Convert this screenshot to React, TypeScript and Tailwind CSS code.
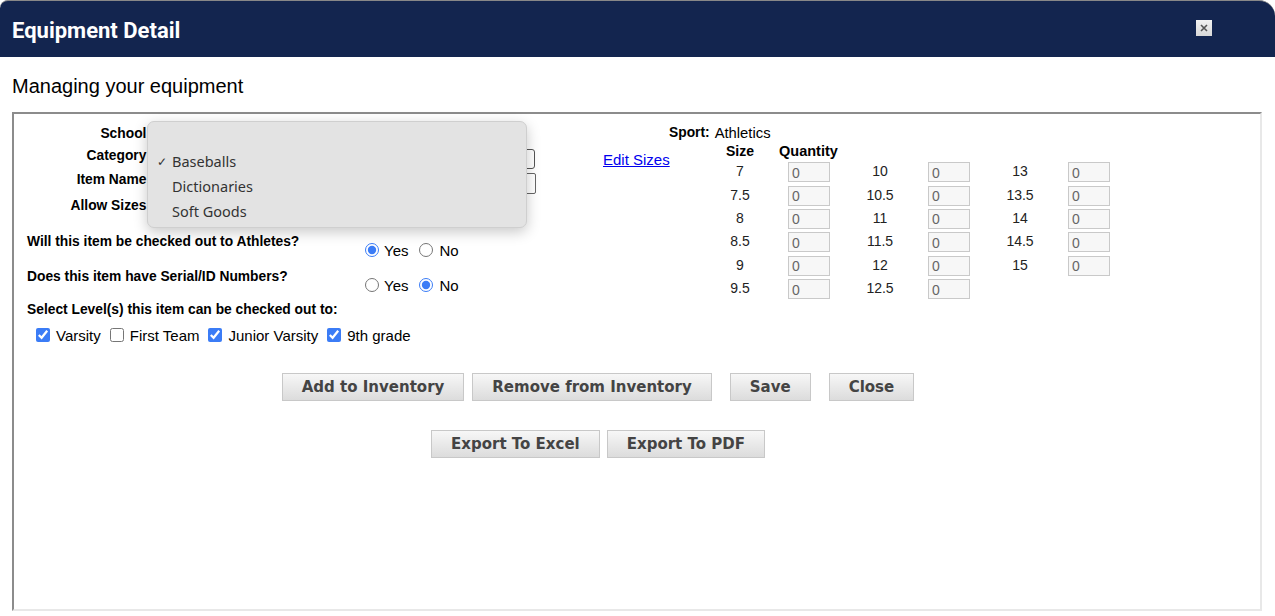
import React from "react";

const sizeCols = [
  ["7", "7.5", "8", "8.5", "9", "9.5"],
  ["10", "10.5", "11", "11.5", "12", "12.5"],
  ["13", "13.5", "14", "14.5", "15"],
];

const categoryOptions = ["Baseballs", "Dictionaries", "Soft Goods"];

const levels = [
  { name: "Varsity", checked: true },
  { name: "First Team", checked: false },
  { name: "Junior Varsity", checked: true },
  { name: "9th grade", checked: true },
];

const Btn = ({ label }: { label: string }) => (
  <button className="h-[28px] px-[19px] border border-[#c8c8c8] bg-gradient-to-b from-[#f7f7f7] to-[#dcdcdc] text-[#444] font-bold text-[15px] [font-family:'DejaVu_Sans',sans-serif]">
    {label}
  </button>
);

const QtyBox = () => (
  <input
    readOnly
    value="0"
    className="w-[42px] h-[20px] border border-[#c9c9c9] bg-[#f7f7f7] text-[#666] text-[14px] pl-[3px] pt-[2px] outline-none"
  />
);

const SizeCol = ({ sizes }: { sizes: string[] }) => (
  <div className="flex flex-col">
    {sizes.map((s) => (
      <div key={s} className="h-[23.4px] flex items-center">
        <span className="w-[40px] text-center text-[14px] text-[#222] -mt-[2px]">{s}</span>
        <span className="ml-[28px]">
          <QtyBox />
        </span>
      </div>
    ))}
  </div>
);

const YesNo = ({ name, yes }: { name: string; yes: boolean }) => (
  <div className="h-[18px] mt-[8px] flex items-center text-[15px]">
    <input type="radio" name={name} defaultChecked={yes} className="w-[14px] h-[14px] m-0 accent-[#3b7cf6]" />
    <span className="ml-[5px] mt-[2px]">Yes</span>
    <input type="radio" name={name} defaultChecked={!yes} className="w-[14px] h-[14px] m-0 ml-[11px] accent-[#3b7cf6]" />
    <span className="ml-[6px] mt-[2px]">No</span>
  </div>
);

export default function App() {
  return (
    <div className="w-[1275px] h-[616px] bg-white [font-family:'Liberation_Sans',Arial,sans-serif] text-black overflow-hidden">
      <div className="h-[57px] bg-[#13254f] rounded-tl-[8px] rounded-tr-[16px] border-t border-[#888] flex items-center justify-between pl-[12px] pr-[63px]">
        <h1 className="text-white text-[22px] font-bold [font-family:Roboto,sans-serif] mt-[3px]">
          Equipment Detail
        </h1>
        <button className="w-[16px] h-[16px] bg-gradient-to-b from-[#f2f2f2] to-[#d8d8d8] flex items-center justify-center mt-[-2px]">
          <svg width="8" height="8" viewBox="0 0 8 8">
            <path d="M1 1L7 7M7 1L1 7" stroke="#555" strokeWidth="1.6" />
          </svg>
        </button>
      </div>

      <div className="pl-[12px] pt-[14px] text-[20px] h-[55px]">Managing your equipment</div>

      <div className="relative ml-[12px] w-[1250px] h-[499px] border-2 border-t-[#8c8c8c] border-l-[#8c8c8c] border-r-[#e8e8e8] border-b-[#e8e8e8]">
        <div className="flex">
          {/* left form */}
          <div className="w-[586px] pt-[10px]">
            <div className="flex flex-col text-[13.8px]">
              <div className="h-[21px] flex items-center">
                <span className="w-[137px] text-right font-bold">School:</span>
              </div>
              <div className="h-[23px] flex items-center">
                <span className="w-[137px] text-right font-bold">Category:</span>
                <div className="-ml-[2px] w-[386px] h-[20px] border border-[#555] rounded-[3px] mt-[4px]" />
              </div>
              <div className="h-[25px] flex items-center">
                <span className="w-[137px] text-right font-bold">Item Name:</span>
                <div className="-ml-[2px] w-[387px] h-[21px] border border-[#666] rounded-[2px] mt-[6px]" />
              </div>
              <div className="h-[26px] flex items-center">
                <span className="w-[137px] text-right font-bold">Allow Sizes:</span>
              </div>
            </div>

            <div className="flex items-start h-[35px] mt-[14px] pl-[13px] text-[13.8px]">
              <span className="w-[338px] h-[18px] flex items-center font-bold">Will this item be checked out to Athletes?</span>
              <YesNo name="ath" yes={true} />
            </div>
            <div className="flex items-start h-[33px] pl-[13px] text-[13.8px]">
              <span className="w-[338px] h-[18px] flex items-center font-bold">Does this item have Serial/ID Numbers?</span>
              <YesNo name="ser" yes={false} />
            </div>
            <div className="pl-[13px] h-[18px] flex items-center text-[13.8px] font-bold">
              Select Level(s) this item can be checked out to:
            </div>
            <div className="flex items-center h-[18px] pl-[22px] mt-[7px] text-[15px]">
              {levels.map((l) => (
                <label key={l.name} className="flex items-center mr-[9px]">
                  <input type="checkbox" defaultChecked={l.checked} className="w-[14px] h-[14px] m-0 mr-[6px] accent-[#3b7cf6]" />
                  <span className="mt-[2px]">{l.name}</span>
                </label>
              ))}
            </div>
          </div>

          {/* right sizes */}
          <div className="pt-[10px]">
            <div className="h-[18px] flex items-center pl-[69px]">
              <span className="font-bold text-[13.8px]">Sport:</span>
              <span className="ml-[5px] text-[14.8px]">Athletics</span>
            </div>
            <div className="flex">
              <a href="#" className="w-[120px] pl-[3px] mt-[7px] text-[15px] text-[#0000ee] underline">
                Edit Sizes
              </a>
              <div>
                <div className="flex h-[19px] items-center text-[14px] font-bold">
                  <span className="w-[40px] text-center">Size</span>
                  <span className="ml-[19px] text-[14.5px]">Quantity</span>
                </div>
                <div className="flex gap-[30px]">
                  {sizeCols.map((c, i) => (
                    <SizeCol key={i} sizes={c} />
                  ))}
                </div>
              </div>
            </div>
          </div>
        </div>

        <div className="w-[1168px] flex justify-center mt-[29px]">
          <div className="flex">
            <Btn label="Add to Inventory" />
            <span className="ml-[8px]"><Btn label="Remove from Inventory" /></span>
            <span className="ml-[18px]"><Btn label="Save" /></span>
            <span className="ml-[18px]"><Btn label="Close" /></span>
          </div>
        </div>
        <div className="w-[1168px] flex justify-center mt-[29px] gap-[7px]">
          <Btn label="Export To Excel" />
          <Btn label="Export To PDF" />
        </div>

        {/* open select menu */}
        <div className="absolute left-[133px] top-[7px] w-[380px] h-[107px] rounded-[7px] bg-[#e3e3e3] border border-[#cfcfcf] shadow-[0_4px_14px_rgba(0,0,0,0.22)] pt-[27px] [font-family:'Noto_Sans',sans-serif] text-[14.5px] text-[#333]">
          {categoryOptions.map((o, i) => (
            <div key={o} className="h-[25px] flex items-center">
              <span className="w-[24px] pl-[9px] text-[12px]">{i === 0 ? "✓" : ""}</span>
              <span>{o}</span>
            </div>
          ))}
        </div>
      </div>
    </div>
  );
}
